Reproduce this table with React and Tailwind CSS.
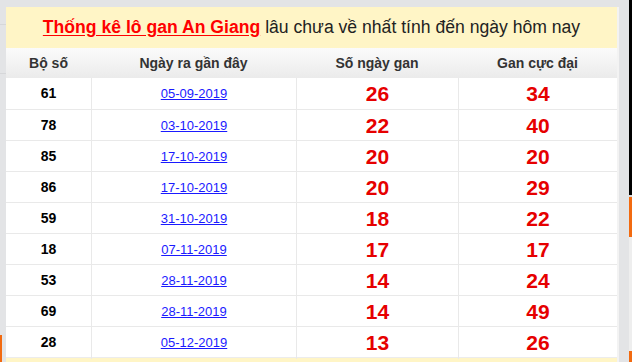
import React from "react";

const rows = [
  { so: "61", ngay: "05-09-2019", gan: 26, max: 34 },
  { so: "78", ngay: "03-10-2019", gan: 22, max: 40 },
  { so: "85", ngay: "17-10-2019", gan: 20, max: 20 },
  { so: "86", ngay: "17-10-2019", gan: 20, max: 29 },
  { so: "59", ngay: "31-10-2019", gan: 18, max: 22 },
  { so: "18", ngay: "07-11-2019", gan: 17, max: 17 },
  { so: "53", ngay: "28-11-2019", gan: 14, max: 24 },
  { so: "69", ngay: "28-11-2019", gan: 14, max: 49 },
  { so: "28", ngay: "05-12-2019", gan: 13, max: 26 },
];

const cols = "grid grid-cols-[85px_205px_162px_159px]";

const App = () => {
  return (
    <div
      className="flex w-[632px] h-[362px] overflow-hidden bg-[#e3e4e6]"
      style={{ fontFamily: '"Liberation Sans", Arial, sans-serif' }}
    >
      {/* left edge */}
      <div className="w-[6px] flex flex-col">
        <div className="h-[24px]" />
        <div className="h-px bg-[#d6d7d9]" />
        <div className="h-[48px]" />
        <div className="h-px bg-[#d6d7d9]" />
        <div className="flex-1" />
        <div className="w-[2px] h-[27px] bg-[#f26a10]" />
      </div>

      {/* main panel */}
      <div className="w-[613px] pt-[7px]">
        <div className="bg-[#f3f3f3] pr-[2px]">
          <div className="h-[41px] bg-[#fff5c6] flex items-center justify-center text-[17.6px] leading-none">
            <a href="#" className="text-[#ff0000] font-bold underline underline-offset-2">
              Thống kê lô gan An Giang
            </a>
            <span className="ml-[5px] text-[#222]">lâu chưa về nhất tính đến ngày hôm nay</span>
          </div>

          <div
            className={`${cols} h-[30px] items-center bg-gradient-to-b from-[#fbfbfb] to-[#ebebeb] text-[14px] font-bold text-[#333]`}
          >
            <div className="text-center">Bộ số</div>
            <div className="text-center">Ngày ra gần đây</div>
            <div className="text-center">Số ngày gan</div>
            <div className="text-center">Gan cực đại</div>
          </div>

          {rows.map((r, i) => (
            <div
              key={i}
              className={`${cols} h-[31px] bg-white ${i > 0 ? "border-t border-[#e9e9e9]" : ""}`}
            >
              <div className="flex items-center justify-center text-[14px] font-bold text-black">
                {r.so}
              </div>
              <div className="flex items-center justify-center border-l border-[#e9e9e9]">
                <a href="#" className="text-[13px] text-[#1a1aff] underline">
                  {r.ngay}
                </a>
              </div>
              <div className="flex items-center justify-center border-l border-[#e9e9e9] text-[21px] font-bold text-[#e60000]">
                {r.gan}
              </div>
              <div className="flex items-center justify-center border-l border-[#e9e9e9] text-[21px] font-bold text-[#e60000]">
                {r.max}
              </div>
            </div>
          ))}
          <div className="h-px bg-[#ececec]" />
          <div className="h-[6px] bg-[#fff5c6]" />
        </div>
      </div>

      <div className="w-[10px]" />

      {/* right edge */}
      <div className="w-[3px] flex flex-col">
        <div className="h-[195px] bg-black" />
        <div className="h-[2px] bg-[#d8d8d8]" />
        <div className="h-[40px] bg-[#f26a10]" />
        <div className="flex-1 bg-[#eeeeee]" />
        <div className="h-[11px] bg-[#f26a10]" />
      </div>
    </div>
  );
};

export default App;
